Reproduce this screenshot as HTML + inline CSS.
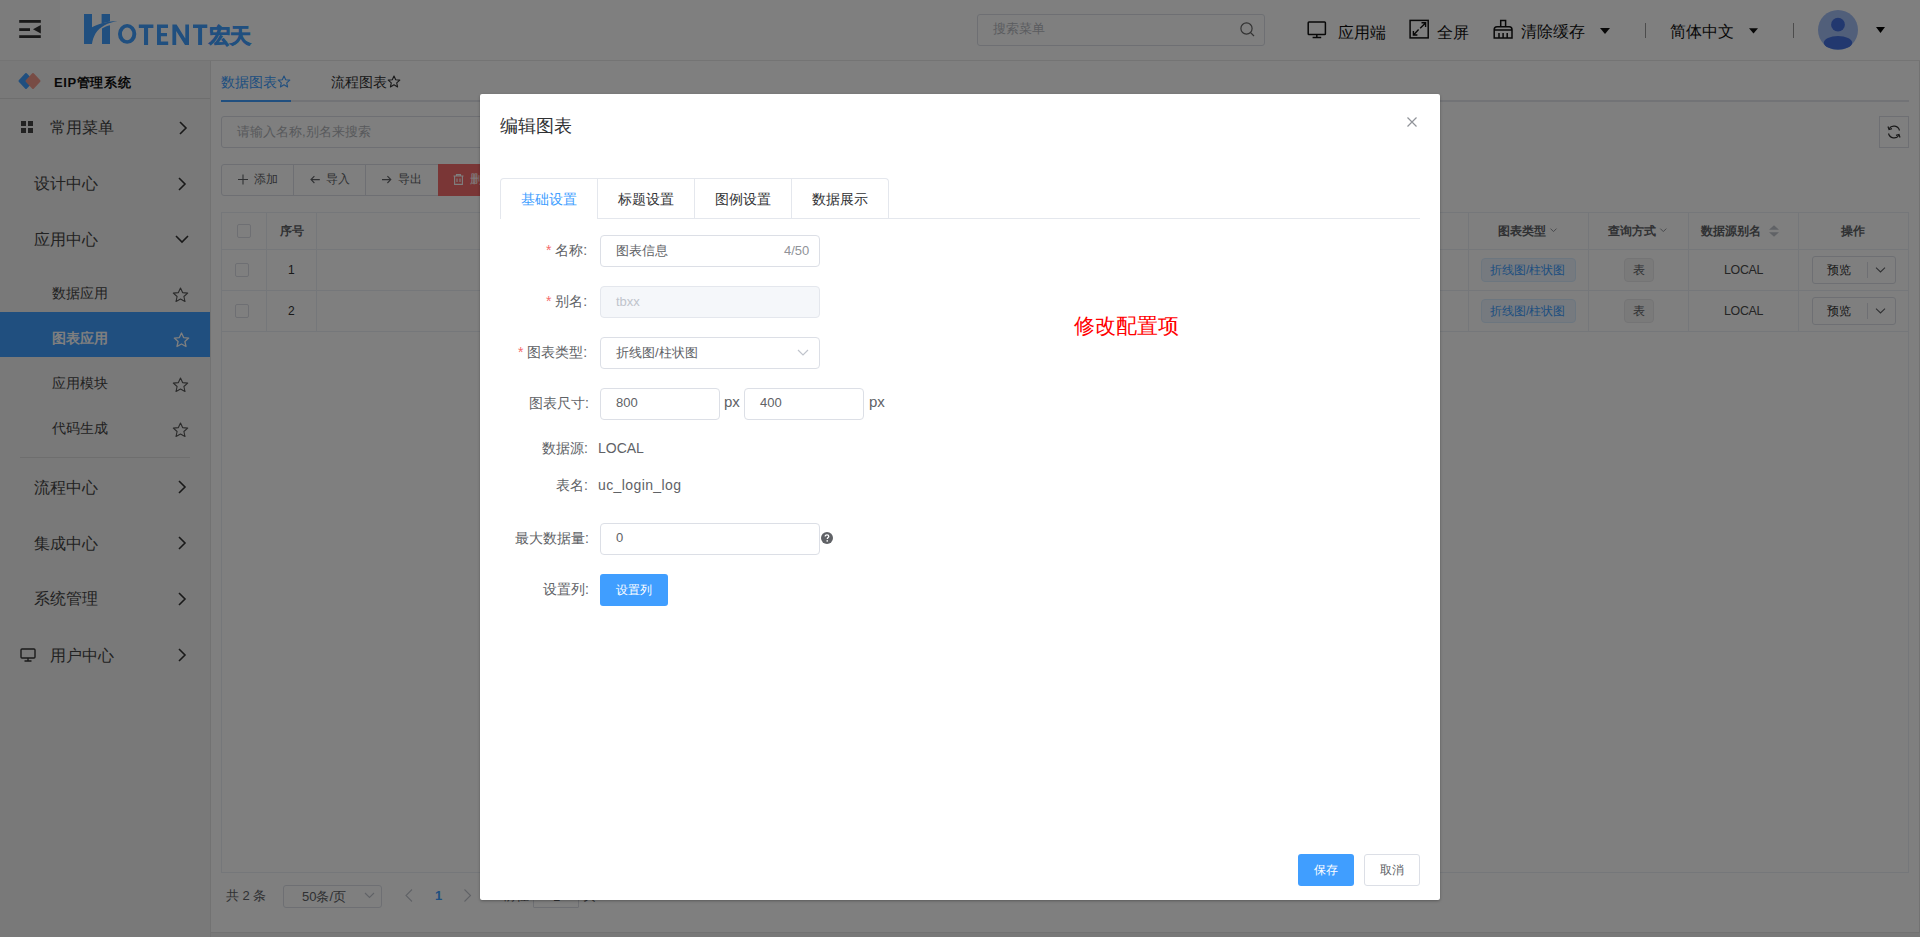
<!DOCTYPE html>
<html><head><meta charset="utf-8">
<style>
*{box-sizing:border-box;margin:0;padding:0}
html,body{width:1920px;height:937px;overflow:hidden;background:#f0f0f0;font-family:"Liberation Sans",sans-serif;color:#303133}
.t{position:absolute;white-space:nowrap;line-height:1}
.a{position:absolute}
#header{position:absolute;left:0;top:0;width:1920px;height:61px;background:#fff;border-bottom:1px solid #e8e8e8}
#hamb{position:absolute;left:0;top:0;width:60px;height:60px;background:#f8f8f8}
#sidebar{position:absolute;left:0;top:61px;width:211px;height:876px;background:#f3f3f3;border-right:1px solid #e4e4e4}
#card{position:absolute;left:211px;top:61px;width:1709px;height:872px;background:#fff;border-bottom:1px solid #e4e4e4;border-right:1px solid #e4e4e4}
#overlay{position:absolute;left:0;top:0;width:1920px;height:937px;background:#000;opacity:.5}
#dialog{position:absolute;left:480px;top:94px;width:960px;height:806px;background:#fff;border-radius:2px;box-shadow:0 1px 3px rgba(0,0,0,.3)}
.mi{font-size:16px;color:#444}
.si{font-size:14px;color:#444}
.arr{position:absolute;width:8px;height:13px}
.th{font-size:12px;font-weight:bold;color:#606266}
.tab{font-size:14px;color:#303133}
.lab{font-size:14px;color:#606266}
.req{color:#f56c6c;margin-right:0px}
.inp{position:absolute;height:32px;border:1px solid #dcdfe6;border-radius:4px;background:#fff}
.itx{font-size:13px;color:#606266}
.cell{position:absolute;border-right:1px solid #ebeef5;border-bottom:1px solid #ebeef5}
</style></head>
<body>
<div id="header">
  <div id="hamb">
    <svg class="a" style="left:10px;top:10px" width="40" height="40" viewBox="10 10 40 40"><g fill="#333"><rect x="19.2" y="20" width="21.6" height="2.8"/><rect x="19.2" y="28.2" width="10.8" height="2.8"/><rect x="19.2" y="35.2" width="21.6" height="2.8"/><path d="M40.8 25 V33.6 L33 29.3 Z"/></g></svg>
  </div>
  <!-- logo -->
  <svg class="a" style="left:0;top:0" width="260" height="60" viewBox="0 0 260 60">
    <g fill="#409eff">
    <path d="M84 14 H92 V27.3 C97 24.6 105 21.6 117.5 21 C108 22.6 100 26.5 95.5 33.5 C93.5 37 92.4 40.5 92 44 H84 Z"/>
    <path d="M101.6 14 H110 V21.6 C106.5 22.1 104 22.8 101.6 23.6 Z"/>
    <path d="M102 28.6 C104.5 27 107 26 110 25.3 V44 H102 Z"/>
    <path fill-rule="evenodd" d="M127.15 24 A9.15 9.9 0 1 1 127.15 43.8 A9.15 9.9 0 1 1 127.15 24 Z M127.15 27.6 A5.2 6.3 0 1 0 127.15 40.2 A5.2 6.3 0 1 0 127.15 27.6 Z"/>
    <path d="M138.8 24.5 H153.4 V28 H148.1 V45 H144 V28 H138.8 Z"/>
    <path d="M157 24.5 H168 V28 H160.9 V33.1 H167 V36.3 H160.9 V41.4 H168.2 V45 H157 Z"/>
    <path d="M172.4 24.5 H176.6 L185.3 38.5 V24.5 H189 V45 H185 L176.2 31 V45 H172.4 Z"/>
    <path d="M193 24.5 H207.3 V28 H202.1 V45 H198.1 V28 H193 Z"/>
    </g>
  </svg>
  <div class="t" style="left:209px;top:25px;font-size:21px;font-weight:bold;color:#409eff;letter-spacing:0px;-webkit-text-stroke:0.7px #409eff">宏天</div>
  <!-- search -->
  <div class="a" style="left:977px;top:14px;width:288px;height:32px;border:1px solid #dcdfe6;border-radius:3px;background:#fff"></div>
  <div class="t" style="left:993px;top:22px;font-size:13px;color:#b6b9bf">搜索菜单</div>
  <svg class="a" style="left:1239px;top:21px" width="17" height="17" viewBox="0 0 17 17"><circle cx="7.5" cy="7.5" r="5.6" fill="none" stroke="#666" stroke-width="1.2"/><path d="M11.6 11.6 L15 15" stroke="#666" stroke-width="1.2"/></svg>
  <!-- items -->
  <svg class="a" style="left:1300px;top:14px" width="220" height="32" viewBox="1300 14 220 32">
    <g fill="none" stroke="#111" stroke-width="1.5">
      <rect x="1308.2" y="21.9" width="17.2" height="12.6" rx="0.8"/>
      <path d="M1316.8 34.5 V37.2 M1312.6 37.6 H1321.2"/>
      <rect x="1410.1" y="20.4" width="18.1" height="17.5"/>
      <path d="M1418.6 29.6 L1413.5 34.9 M1413.4 31 V35 H1417.4 M1420.2 28.2 L1425.5 22.9 M1421.5 22.8 H1425.6 V26.9" stroke-width="1.4"/>
      <path d="M1500.7 26.8 V20.5 H1505.6 V26.8 M1494.2 38 V29.8 C1494.2 27.8 1495 26.8 1497 26.8 H1509.3 C1511.3 26.8 1512 27.8 1512 29.8 V38 Z M1494.2 30 H1512 M1499 33 V38 M1503.1 33 V38 M1507.2 33 V38" stroke-width="1.5"/>
    </g>
  </svg>
  <div class="t" style="left:1338px;top:25px;font-size:16px;color:#111">应用端</div>
  <div class="t" style="left:1437px;top:25px;font-size:16px;color:#111">全屏</div>
  <div class="t" style="left:1521px;top:24px;font-size:16px;color:#111">清除缓存</div>
  <svg class="a" style="left:1600px;top:28px" width="10" height="6" viewBox="0 0 10 6"><path d="M0 0 H10 L5 6 Z" fill="#111"/></svg>
  <div class="a" style="left:1645px;top:23px;width:1px;height:15px;background:#999"></div>
  <div class="t" style="left:1670px;top:24px;font-size:16px;color:#111">简体中文</div>
  <svg class="a" style="left:1749px;top:28px" width="9" height="6" viewBox="0 0 9 6"><path d="M0 0.3 H9 L4.5 5.5 Z" fill="#111"/></svg>
  <div class="a" style="left:1793px;top:23px;width:1px;height:15px;background:#999"></div>
  <svg class="a" style="left:1818px;top:10px" width="40" height="40" viewBox="0 0 40 40"><circle cx="20" cy="20" r="20" fill="#a3bff5"/><circle cx="20" cy="14.7" r="6.9" fill="#4570de"/><ellipse cx="20" cy="32.7" rx="14.2" ry="6.7" fill="#4570de"/></svg>
  <svg class="a" style="left:1876px;top:27px" width="9" height="6" viewBox="0 0 9 6"><path d="M0 0 H9 L4.5 6 Z" fill="#000"/></svg>
</div>

<div id="sidebar">
  <!-- coords inside sidebar: y - 61 -->
  <svg class="a" style="left:17px;top:11px" width="26" height="19" viewBox="17 72 26 19"><path d="M26 74 L32.5 81 L26 88 L19.5 81 Z" fill="#409eff" stroke="#409eff" stroke-width="2" stroke-linejoin="round"/><path d="M33 74 L39.5 81 L33 88 L26.5 81 Z" fill="#f0988a" stroke="#f0988a" stroke-width="2" stroke-linejoin="round"/></svg>
  <div class="t" style="left:54px;top:15px;font-size:13px;font-weight:bold;color:#111;letter-spacing:0.6px">EIP管理系统</div>
  <div class="a" style="left:0;top:37px;width:210px;height:1px;background:#ddd"></div>
  <svg class="a" style="left:21px;top:60px" width="12" height="12" viewBox="0 0 12 12"><rect x="0" y="0" width="5" height="5" fill="#444"/><rect x="7" y="0" width="5" height="5" fill="#444"/><rect x="0" y="7" width="5" height="5" fill="#444"/><rect x="7" y="7" width="5" height="5" fill="#444"/></svg>
  <div class="t mi" style="left:50px;top:59px">常用菜单</div>
  <div class="t mi" style="left:34px;top:115px">设计中心</div>
  <div class="t mi" style="left:34px;top:171px">应用中心</div>
  <div class="t si" style="left:52px;top:225px">数据应用</div>
  <div class="a" style="left:0;top:251px;width:210px;height:45px;background:#409eff"></div>
  <div class="t si" style="left:52px;top:270px;color:#fff;font-weight:bold">图表应用</div>
  <div class="t si" style="left:52px;top:315px">应用模块</div>
  <div class="t si" style="left:52px;top:360px">代码生成</div>
  <div class="a" style="left:20px;top:396px;width:170px;height:1px;background:#ddd"></div>
  <div class="t mi" style="left:34px;top:419px">流程中心</div>
  <div class="t mi" style="left:34px;top:475px">集成中心</div>
  <div class="t mi" style="left:34px;top:530px">系统管理</div>
  <svg class="a" style="left:20px;top:587px" width="16" height="14" viewBox="0 0 16 14"><rect x="1" y="1" width="14" height="9" rx="1" fill="none" stroke="#333" stroke-width="1.4"/><path d="M8 10 V12.5 M4.5 13 H11.5" stroke="#333" stroke-width="1.4"/></svg>
  <div class="t mi" style="left:50px;top:587px">用户中心</div>
  <!-- arrows -->
  <svg class="a" style="left:178px;top:60px" width="10" height="14" viewBox="0 0 10 14"><path d="M2 1 L8 7 L2 13" fill="none" stroke="#333" stroke-width="1.6"/></svg>
  <svg class="a" style="left:177px;top:116px" width="10" height="14" viewBox="0 0 10 14"><path d="M2 1 L8 7 L2 13" fill="none" stroke="#333" stroke-width="1.6"/></svg>
  <svg class="a" style="left:175px;top:173px" width="14" height="10" viewBox="0 0 14 10"><path d="M1 2 L7 8 L13 2" fill="none" stroke="#333" stroke-width="1.6"/></svg>
  <svg class="a" style="left:177px;top:419px" width="10" height="14" viewBox="0 0 10 14"><path d="M2 1 L8 7 L2 13" fill="none" stroke="#333" stroke-width="1.6"/></svg>
  <svg class="a" style="left:177px;top:475px" width="10" height="14" viewBox="0 0 10 14"><path d="M2 1 L8 7 L2 13" fill="none" stroke="#333" stroke-width="1.6"/></svg>
  <svg class="a" style="left:177px;top:531px" width="10" height="14" viewBox="0 0 10 14"><path d="M2 1 L8 7 L2 13" fill="none" stroke="#333" stroke-width="1.6"/></svg>
  <svg class="a" style="left:177px;top:587px" width="10" height="14" viewBox="0 0 10 14"><path d="M2 1 L8 7 L2 13" fill="none" stroke="#333" stroke-width="1.6"/></svg>
  <!-- stars -->
  <svg class="a" style="left:172px;top:226px" width="17" height="16" viewBox="0 0 17 16"><path d="M8.5 1 L10.6 5.6 L15.7 6.1 L11.9 9.5 L13 14.5 L8.5 12 L4 14.5 L5.1 9.5 L1.3 6.1 L6.4 5.6 Z" fill="none" stroke="#555" stroke-width="1.1" stroke-linejoin="round"/></svg>
  <svg class="a" style="left:173px;top:271px" width="17" height="16" viewBox="0 0 17 16"><path d="M8.5 1 L10.6 5.6 L15.7 6.1 L11.9 9.5 L13 14.5 L8.5 12 L4 14.5 L5.1 9.5 L1.3 6.1 L6.4 5.6 Z" fill="none" stroke="#fff" stroke-width="1.3" stroke-linejoin="round"/></svg>
  <svg class="a" style="left:172px;top:316px" width="17" height="16" viewBox="0 0 17 16"><path d="M8.5 1 L10.6 5.6 L15.7 6.1 L11.9 9.5 L13 14.5 L8.5 12 L4 14.5 L5.1 9.5 L1.3 6.1 L6.4 5.6 Z" fill="none" stroke="#555" stroke-width="1.1" stroke-linejoin="round"/></svg>
  <svg class="a" style="left:172px;top:361px" width="17" height="16" viewBox="0 0 17 16"><path d="M8.5 1 L10.6 5.6 L15.7 6.1 L11.9 9.5 L13 14.5 L8.5 12 L4 14.5 L5.1 9.5 L1.3 6.1 L6.4 5.6 Z" fill="none" stroke="#555" stroke-width="1.1" stroke-linejoin="round"/></svg>
</div>

<div id="card">
  <!-- coords: x-211, y-61 -->
  <div class="a" style="left:10px;top:39px;width:1688px;height:2px;background:#e4e7ed"></div>
  <div class="a" style="left:10px;top:39px;width:70px;height:2px;background:#409eff"></div>
  <div class="t" style="left:10px;top:14px;font-size:14px;color:#409eff">数据图表</div><svg class="a" style="left:66px;top:14px" width="14" height="13" viewBox="0 0 14 13"><path d="M7 1 L8.7 4.7 L12.8 5.1 L9.7 7.8 L10.6 11.9 L7 9.8 L3.4 11.9 L4.3 7.8 L1.2 5.1 L5.3 4.7 Z" fill="none" stroke="#409eff" stroke-width="1.1" stroke-linejoin="round"/></svg>
  <div class="t" style="left:120px;top:14px;font-size:14px;color:#303133">流程图表</div><svg class="a" style="left:176px;top:14px" width="14" height="13" viewBox="0 0 14 13"><path d="M7 1 L8.7 4.7 L12.8 5.1 L9.7 7.8 L10.6 11.9 L7 9.8 L3.4 11.9 L4.3 7.8 L1.2 5.1 L5.3 4.7 Z" fill="none" stroke="#303133" stroke-width="1.1" stroke-linejoin="round"/></svg>
  <!-- search input -->
  <div class="a" style="left:10px;top:55px;width:500px;height:32px;border:1px solid #dcdfe6;border-radius:3px"></div>
  <div class="t" style="left:26px;top:64px;font-size:13px;color:#b0b3b8">请输入名称,别名来搜索</div>
  <!-- toolbar -->
  <div class="a" style="left:10px;top:103px;width:300px;height:32px;border:1px solid #dcdfe6;border-radius:3px"></div>
  <div class="a" style="left:82px;top:103px;width:1px;height:32px;background:#dcdfe6"></div>
  <div class="a" style="left:154px;top:103px;width:1px;height:32px;background:#dcdfe6"></div>
  <svg class="a" style="left:0;top:0" width="270" height="140" viewBox="211 61 270 140">
    <g fill="none" stroke="#606266" stroke-width="1.1">
      <path d="M243 174.6 V184.4 M238 179.5 H248"/>
      <path d="M311 179.6 H319.8 M314.4 176.2 L311 179.6 L314.4 183"/>
      <path d="M382 179.6 H390.8 M387.4 176.2 L390.8 179.6 L387.4 183"/>
    </g>
  </svg>
  <div class="t" style="left:43px;top:112px;font-size:12px;color:#606266">添加</div>
  <div class="t" style="left:115px;top:112px;font-size:12px;color:#606266">导入</div>
  <div class="t" style="left:187px;top:112px;font-size:12px;color:#606266">导出</div>
  <div class="a" style="left:227px;top:103px;width:100px;height:32px;background:#f56c6c;border-radius:0 3px 3px 0"></div>
  <svg class="a" style="left:242px;top:113px" width="11" height="11" viewBox="0 0 11 11"><path d="M0.5 2 H10.5 M3.5 2 V0.6 H7.5 V2 M1.6 2 V10.4 H9.4 V2 M4 4.5 V8 M7 4.5 V8" fill="none" stroke="#fff" stroke-width="1.1"/></svg>
  <div class="t" style="left:259px;top:112px;font-size:12px;color:#fff">删除</div>
  <!-- refresh -->
  <div class="a" style="left:1668px;top:55px;width:30px;height:32px;border:1px solid #dcdfe6"></div>
  <svg class="a" style="left:1675px;top:63px" width="16" height="16" viewBox="0 0 16 16"><path d="M13.5 6.5 A5.8 5.8 0 0 0 3 4.8 M2.5 9.5 A5.8 5.8 0 0 0 13 11.2" fill="none" stroke="#333" stroke-width="1.2"/><path d="M2 2.5 L3 5.6 L6 4.6 M14 13.5 L13 10.4 L10 11.4" fill="none" stroke="#333" stroke-width="1.2"/></svg>
  <!-- table -->
  <div class="a" style="left:10px;top:151px;width:1688px;height:661px;border:1px solid #ebeef5"></div>
    <div class="a" style="left:11px;top:188px;width:1686px;height:1px;background:#ebeef5"></div>
  <div class="a" style="left:11px;top:229px;width:1686px;height:1px;background:#ebeef5"></div>
    <div class="a" style="left:11px;top:270px;width:1686px;height:1px;background:#ebeef5"></div>
  <div class="a" style="left:55px;top:152px;width:1px;height:118px;background:#ebeef5"></div>
  <div class="a" style="left:105px;top:152px;width:1px;height:118px;background:#ebeef5"></div>
  <div class="a" style="left:1257px;top:152px;width:1px;height:118px;background:#ebeef5"></div>
  <div class="a" style="left:1377px;top:152px;width:1px;height:118px;background:#ebeef5"></div>
  <div class="a" style="left:1477px;top:152px;width:1px;height:118px;background:#ebeef5"></div>
  <div class="a" style="left:1587px;top:152px;width:1px;height:118px;background:#ebeef5"></div>
  <div class="a" style="left:26px;top:163px;width:14px;height:14px;border:1px solid #dcdfe6;border-radius:2px;background:#fff"></div>
  <div class="a" style="left:24px;top:202px;width:14px;height:14px;border:1px solid #dcdfe6;border-radius:2px;background:#fff"></div>
  <div class="a" style="left:24px;top:243px;width:14px;height:14px;border:1px solid #dcdfe6;border-radius:2px;background:#fff"></div>
  <div class="t th" style="left:69px;top:164px">序号</div>
  <div class="t" style="left:77px;top:203px;font-size:12px;color:#333">1</div>
  <div class="t" style="left:77px;top:244px;font-size:12px;color:#333">2</div>
  <div class="t th" style="left:1287px;top:164px">图表类型</div>
  <div class="t th" style="left:1397px;top:164px">查询方式</div>
  <div class="t th" style="left:1490px;top:164px">数据源别名</div>
  <div class="t th" style="left:1630px;top:164px">操作</div>
  <div class="a" style="left:1270px;top:197px;width:95px;height:24px;background:#ecf5ff;border:1px solid #d9ecff;border-radius:4px"></div>
  <div class="t" style="left:1279px;top:203px;font-size:12px;color:#409eff">折线图/柱状图</div>
  <div class="a" style="left:1270px;top:238px;width:95px;height:24px;background:#ecf5ff;border:1px solid #d9ecff;border-radius:4px"></div>
  <div class="t" style="left:1279px;top:244px;font-size:12px;color:#409eff">折线图/柱状图</div>
  <div class="a" style="left:1413px;top:197px;width:30px;height:24px;background:#f4f4f5;border:1px solid #e9e9eb;border-radius:4px"></div>
  <div class="t" style="left:1422px;top:203px;font-size:12px;color:#606266">表</div>
  <div class="a" style="left:1413px;top:238px;width:30px;height:24px;background:#f4f4f5;border:1px solid #e9e9eb;border-radius:4px"></div>
  <div class="t" style="left:1422px;top:244px;font-size:12px;color:#606266">表</div>
  <div class="t" style="left:1513px;top:203px;font-size:12.4px;color:#4a4a4a;letter-spacing:-0.3px">LOCAL</div>
  <div class="t" style="left:1513px;top:244px;font-size:12.4px;color:#4a4a4a;letter-spacing:-0.3px">LOCAL</div>
  <div class="a" style="left:1601px;top:195px;width:84px;height:28px;border:1px solid #dcdfe6;border-radius:3px;background:#fff"></div>
  <div class="t" style="left:1616px;top:203px;font-size:12px;color:#333">预览</div>
  <div class="a" style="left:1601px;top:236px;width:84px;height:28px;border:1px solid #dcdfe6;border-radius:3px;background:#fff"></div>
  <div class="t" style="left:1616px;top:244px;font-size:12px;color:#333">预览</div>
  <svg class="a" style="left:0;top:0" width="1709" height="300" viewBox="211 61 1709 300">
    <g fill="none" stroke="#909399" stroke-width="1">
      <path d="M1550.5 228.6 L1553.5 231.6 L1556.5 228.6"/>
      <path d="M1660.3 228.6 L1663.3 231.6 L1666.3 228.6"/>
    </g>
    <path d="M1774 225.2 L1779 229.8 H1769 Z M1769 232.2 H1779 L1774 236.8 Z" fill="#c0c4cc"/>
    <g stroke="#dcdfe6" stroke-width="1"><path d="M1867.5 262 V278 M1867.5 303 V319"/></g>
    <g fill="none" stroke="#606266" stroke-width="1.1">
      <path d="M1876 267.6 L1880.5 272 L1885 267.6"/>
      <path d="M1876 308.6 L1880.5 313 L1885 308.6"/>
    </g>
  </svg>
  <!-- pagination -->
  <div class="t" style="left:15px;top:828px;font-size:13px;color:#606266">共 2 条</div>
  <div class="a" style="left:72px;top:824px;width:99px;height:23px;border:1px solid #dcdfe6;border-radius:3px"></div>
  <div class="t" style="left:91px;top:829px;font-size:13px;color:#606266">50条/页</div>
  <div class="t" style="left:224px;top:828px;font-size:13px;font-weight:bold;color:#409eff">1</div>
  <svg class="a" style="left:0;top:0" width="300" height="876" viewBox="211 61 300 876">
    <g fill="none" stroke="#909399" stroke-width="1.1">
      <path d="M412 889.5 L406 895.5 L412 901.5" stroke="#c0c4cc"/>
      <path d="M464.5 889.5 L470.5 895.5 L464.5 901.5" stroke="#c0c4cc"/>
      <path d="M365 893 L369.5 897.5 L374 893" stroke="#c0c4cc"/>
    </g>
  </svg>
  <div class="t" style="left:292px;top:828px;font-size:13px;color:#606266">前往</div>
  <div class="a" style="left:322px;top:824px;width:46px;height:23px;border:1px solid #dcdfe6;border-radius:1px"></div>
  <div class="t" style="left:342px;top:829px;font-size:13px;color:#606266">1</div>
  <div class="t" style="left:372px;top:828px;font-size:13px;color:#606266">页</div>
</div>

<div id="overlay"></div>

<div id="dialog">
  <!-- coords: x-480, y-94 -->
  <div class="t" style="left:20px;top:23px;font-size:18px;color:#303133">编辑图表</div>
  <svg class="a" style="left:927px;top:23px" width="10" height="10" viewBox="0 0 10 10"><path d="M0.5 0.5 L9.5 9.5 M9.5 0.5 L0.5 9.5" stroke="#909399" stroke-width="1.2"/></svg>
  <!-- tabs -->
  <div class="a" style="left:20px;top:124px;width:920px;height:1px;background:#e4e7ed"></div>
  <div class="a" style="left:20px;top:84px;width:389px;height:41px;border:1px solid #e4e7ed;border-bottom:none;border-radius:4px 4px 0 0;background:#fff"></div>
  <div class="a" style="left:117px;top:85px;width:1px;height:40px;background:#e4e7ed"></div>
  <div class="a" style="left:214px;top:85px;width:1px;height:40px;background:#e4e7ed"></div>
  <div class="a" style="left:311px;top:85px;width:1px;height:40px;background:#e4e7ed"></div>
  <div class="a" style="left:118px;top:124px;width:291px;height:1px;background:#e4e7ed"></div>
  <div class="t tab" style="left:41px;top:98px;color:#409eff">基础设置</div>
  <div class="t tab" style="left:138px;top:98px">标题设置</div>
  <div class="t tab" style="left:235px;top:98px">图例设置</div>
  <div class="t tab" style="left:332px;top:98px">数据展示</div>
  <!-- form -->
  <div class="t lab" style="left:66px;top:149px"><span class="req">*</span> 名称:</div>
  <div class="inp" style="left:120px;top:141px;width:220px"></div>
  <div class="t itx" style="left:136px;top:150px">图表信息</div>
  <div class="t itx" style="left:304px;top:150px;color:#909399">4/50</div>

  <div class="t lab" style="left:66px;top:200px"><span class="req">*</span> 别名:</div>
  <div class="inp" style="left:120px;top:192px;width:220px;background:#f5f7fa;border-color:#e4e7ed"></div>
  <div class="t itx" style="left:136px;top:201px;color:#c0c4cc">tbxx</div>

  <div class="t lab" style="left:38px;top:251px"><span class="req">*</span> 图表类型:</div>
  <div class="inp" style="left:120px;top:243px;width:220px"></div>
  <div class="t itx" style="left:136px;top:252px">折线图/柱状图</div>
  <svg class="a" style="left:317px;top:255px" width="12" height="8" viewBox="0 0 12 8"><path d="M1 1 L6 6 L11 1" fill="none" stroke="#c0c4cc" stroke-width="1.2"/></svg>

  <div class="t lab" style="left:49px;top:302px">图表尺寸:</div>
  <div class="inp" style="left:120px;top:294px;width:120px"></div>
  <div class="t itx" style="left:136px;top:302px">800</div>
  <div class="t" style="left:244px;top:300px;font-size:15px;color:#606266">px</div>
  <div class="inp" style="left:264px;top:294px;width:120px"></div>
  <div class="t itx" style="left:280px;top:302px">400</div>
  <div class="t" style="left:389px;top:300px;font-size:15px;color:#606266">px</div>

  <div class="t lab" style="left:62px;top:347px">数据源:</div>
  <div class="t" style="left:118px;top:347px;font-size:14px;color:#606266">LOCAL</div>
  <div class="t lab" style="left:76px;top:384px">表名:</div>
  <div class="t" style="left:118px;top:384px;font-size:14px;color:#606266;letter-spacing:0.4px">uc_login_log</div>

  <div class="t lab" style="left:35px;top:437px">最大数据量:</div>
  <div class="inp" style="left:120px;top:429px;width:220px"></div>
  <div class="t itx" style="left:136px;top:437px">0</div>
  <svg class="a" style="left:341px;top:438px" width="12" height="12" viewBox="0 0 12 12"><circle cx="6" cy="6" r="6" fill="#606266"/><path d="M4.2 4.6 C4.2 3.4 5 2.8 6 2.8 C7 2.8 7.8 3.4 7.8 4.4 C7.8 5.5 6.3 5.6 6.3 6.9" fill="none" stroke="#fff" stroke-width="1.3"/><circle cx="6.2" cy="8.9" r="0.8" fill="#fff"/></svg>

  <div class="t lab" style="left:63px;top:488px">设置列:</div>
  <div class="a" style="left:120px;top:480px;width:68px;height:32px;background:#409eff;border-radius:3px"></div>
  <div class="t" style="left:136px;top:490px;font-size:12px;color:#fff">设置列</div>

  <div class="t" style="left:594px;top:221px;font-size:21px;color:#ff0000">修改配置项</div>

  <!-- footer -->
  <div class="a" style="left:818px;top:760px;width:56px;height:32px;background:#409eff;border-radius:3px"></div>
  <div class="t" style="left:834px;top:770px;font-size:12px;color:#fff">保存</div>
  <div class="a" style="left:884px;top:760px;width:56px;height:32px;border:1px solid #dcdfe6;border-radius:3px;background:#fff"></div>
  <div class="t" style="left:900px;top:770px;font-size:12px;color:#606266">取消</div>
</div>
</body></html>
